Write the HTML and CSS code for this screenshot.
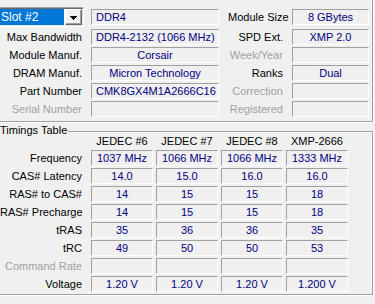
FILE: index.html
```html
<!DOCTYPE html>
<html lang="en">
<head>
<meta charset="UTF-8" />
<meta name="viewport" content="width=device-width, initial-scale=1" />
<title>CPU-Z SPD</title>
<link rel="stylesheet" href="styles.css">
</head>
<body>

<section class="group slot-group">
  <span class="group-title">Memory Slot Selection</span>
  <div class="slot-grid">
    <div class="slot-select">
      <span class="slot-value">Slot #2</span>
      <span class="slot-btn">
        <svg width="7" height="4" viewBox="0 0 7 4" shape-rendering="crispEdges"><path d="M0 0H7V1H6V2H5V3H4V4H3V3H2V2H1V1H0Z" fill="#000"/></svg>
      </span>
    </div>
    <div class="field left">DDR4</div>
    <div class="label">Module Size</div>
    <div class="field">8 GBytes</div>

    <div class="label">Max Bandwidth</div>
    <div class="field left">DDR4-2132 (1066 MHz)</div>
    <div class="label">SPD Ext.</div>
    <div class="field">XMP 2.0</div>

    <div class="label">Module Manuf.</div>
    <div class="field">Corsair</div>
    <div class="label off">Week/Year</div>
    <div class="field"></div>

    <div class="label">DRAM Manuf.</div>
    <div class="field">Micron Technology</div>
    <div class="label">Ranks</div>
    <div class="field">Dual</div>

    <div class="label">Part Number</div>
    <div class="field left">CMK8GX4M1A2666C16</div>
    <div class="label off">Correction</div>
    <div class="field"></div>

    <div class="label off">Serial Number</div>
    <div class="field"></div>
    <div class="label off">Registered</div>
    <div class="field"></div>
  </div>
</section>

<section class="group timing-group">
  <span class="group-title">Timings Table</span>
  <div class="timing-grid">
    <div></div>
    <div class="head">JEDEC #6</div>
    <div class="head">JEDEC #7</div>
    <div class="head">JEDEC #8</div>
    <div class="head">XMP-2666</div>

    <div class="label">Frequency</div>
    <div class="field">1037 MHz</div>
    <div class="field">1066 MHz</div>
    <div class="field">1066 MHz</div>
    <div class="field">1333 MHz</div>

    <div class="label">CAS# Latency</div>
    <div class="field">14.0</div>
    <div class="field">15.0</div>
    <div class="field">16.0</div>
    <div class="field">16.0</div>

    <div class="label">RAS# to CAS#</div>
    <div class="field">14</div>
    <div class="field">15</div>
    <div class="field">15</div>
    <div class="field">18</div>

    <div class="label">RAS# Precharge</div>
    <div class="field">14</div>
    <div class="field">15</div>
    <div class="field">15</div>
    <div class="field">18</div>

    <div class="label">tRAS</div>
    <div class="field">35</div>
    <div class="field">36</div>
    <div class="field">36</div>
    <div class="field">35</div>

    <div class="label">tRC</div>
    <div class="field">49</div>
    <div class="field">50</div>
    <div class="field">50</div>
    <div class="field">53</div>

    <div class="label off">Command Rate</div>
    <div class="field"></div>
    <div class="field"></div>
    <div class="field"></div>
    <div class="field"></div>

    <div class="label">Voltage</div>
    <div class="field">1.20 V</div>
    <div class="field">1.20 V</div>
    <div class="field">1.20 V</div>
    <div class="field">1.200 V</div>
  </div>
</section>

</body>
</html>
```

FILE: styles.css
```css
body {
  margin: 0;
  width: 375px;
  height: 304px;
  overflow: hidden;
  background: #f0f0f0;
  font-family: "Liberation Sans", Arial, sans-serif;
  font-size: 11px;
  color: #000;
}

/* etched group box */
.group {
  position: relative;
  margin: 0 2px 0 -10px;
  padding-left: 9px;
  padding-right: 3px;
  border: 1px solid #a0a0a0;
  box-shadow: inset 1px 1px 0 #fff, 1px 1px 0 #fff;
}
.group-title {
  position: absolute;
  top: -8px;
  left: 8px;
  padding: 0 1px;
  line-height: 13px;
  background: #f0f0f0;
  white-space: nowrap;
}
.slot-group {
  margin-top: -5px;
  padding-top: 11px;
  padding-bottom: 4px;
}
.timing-group {
  margin-top: 9px;
  padding-top: 2px;
  padding-bottom: 2px;
}

.slot-grid {
  display: grid;
  grid-template-columns: 82px 128px 55px 77px;
  grid-template-rows: 20px repeat(5, 16px);
  column-gap: 9px;
  row-gap: 2px;
}
.timing-grid {
  display: grid;
  grid-template-columns: 88px repeat(4, 62px);
  grid-template-rows: 14px repeat(8, 16px);
  column-gap: 3px;
  row-gap: 2px;
}
.timing-grid .label {
  padding-right: 6px;
}

.label {
  align-self: center;
  text-align: right;
  line-height: 16px;
  white-space: nowrap;
}
.label.off {
  color: #a0a0a0;
}
.head {
  text-align: center;
  line-height: 14px;
  white-space: nowrap;
}
.field {
  align-self: center;
  box-sizing: border-box;
  height: 16px;
  padding: 0 3px;
  border: 1px solid;
  border-color: #a0a0a0 #fff #fff #a0a0a0;
  color: #000080;
  line-height: 14px;
  text-align: center;
  white-space: nowrap;
  overflow: hidden;
}
.field.left {
  text-align: left;
  padding-left: 4px;
}

/* slot combobox */
.slot-select {
  justify-self: end;
  display: flex;
  box-sizing: border-box;
  width: 100px;
  margin-right: -2px;
  padding: 1px;
  border: 1px solid;
  border-color: #a0a0a0 #fff #fff #a0a0a0;
  box-shadow: inset 1px 1px 0 #696969, inset -1px -1px 0 #e3e3e3;
  background: #fff;
}
.slot-value {
  flex: 1;
  margin-right: 1px;
  padding-left: 15px;
  background: #0078d7;
  color: #fff;
  font-size: 12px;
  line-height: 16px;
  white-space: nowrap;
}
.slot-btn {
  display: flex;
  align-items: center;
  justify-content: center;
  box-sizing: border-box;
  width: 17px;
  border: 1px solid;
  border-color: #fff #696969 #696969 #fff;
  box-shadow: inset -1px -1px 0 #a0a0a0;
  background: #f0f0f0;
}
.slot-btn svg {
  display: block;
  margin: 1px 1px 0 0;
}
```
